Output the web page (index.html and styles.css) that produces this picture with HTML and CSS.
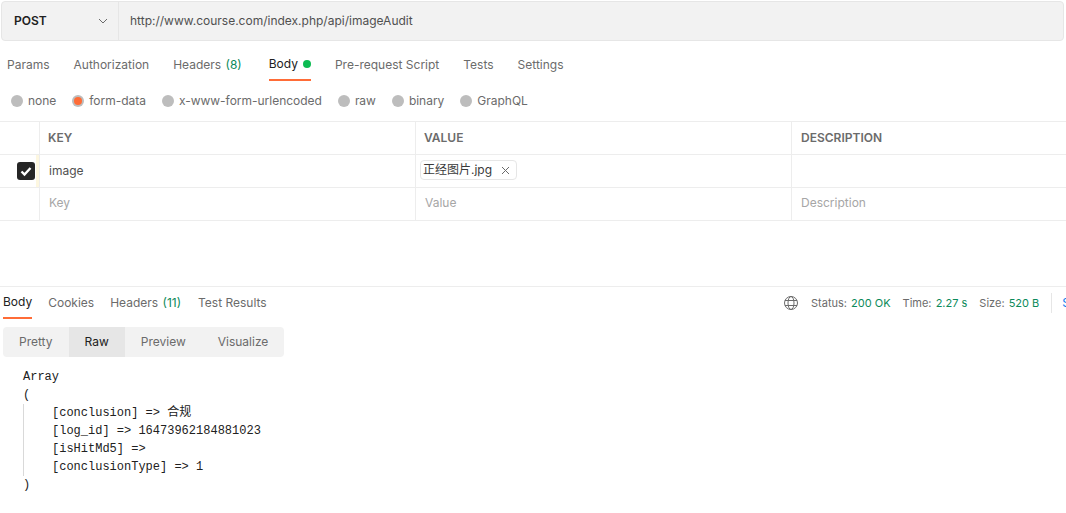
FILE: index.html
```html
<!DOCTYPE html>
<html lang="zh">
<head>
<meta charset="utf-8">
<title>POST imageAudit</title>
<link rel="stylesheet" href="styles.css">
</head>
<body>
<div class="url-bar">
  <div class="method"><span>POST</span>
    <svg class="chev" width="10" height="6" viewBox="0 0 10 6"><path d="M1 1l4 4 4-4" fill="none" stroke="#6b6b6b" stroke-width="1"/></svg>
  </div>
  <div class="url">http://www.course.com/index.php/api/imageAudit</div>
</div>
<nav class="tabs req-tabs">
  <span class="tab">Params</span>
  <span class="tab">Authorization</span>
  <span class="tab wide"><span>Headers <em>(8)</em></span></span>
  <span class="tab active">Body<i class="dot"></i></span>
  <span class="tab">Pre-request Script</span>
  <span class="tab">Tests</span>
  <span class="tab">Settings</span>
</nav>
<div class="radios">
  <label class="radio"><i class="rd"></i>none</label>
  <label class="radio"><i class="rd on"></i>form-data</label>
  <label class="radio"><i class="rd"></i>x-www-form-urlencoded</label>
  <label class="radio"><i class="rd"></i>raw</label>
  <label class="radio"><i class="rd"></i>binary</label>
  <label class="radio"><i class="rd"></i>GraphQL</label>
</div>
<div class="table">
  <div class="row head">
    <div class="c c0"></div><div class="c c1">KEY</div><div class="c c2">VALUE</div><div class="c c3">DESCRIPTION</div>
  </div>
  <div class="row">
    <div class="c c0 changed"><svg width="18" height="18" viewBox="0 0 18 18"><rect width="18" height="18" rx="3" fill="#262626"/><path d="M4.500 9.500l3 3 6-6.500" fill="none" stroke="#fff" stroke-width="2.400"/></svg></div>
    <div class="c c1 val">image</div>
    <div class="c c2"><span class="chip">正经图片.jpg<svg width="9" height="9" viewBox="0 0 9 9"><path d="M1 1l7 7M8 1L1 8" stroke="#6b6b6b" stroke-width="1"/></svg></span></div>
    <div class="c c3"></div>
  </div>
  <div class="row">
    <div class="c c0"></div><div class="c c1 ph">Key</div><div class="c c2 ph">Value</div><div class="c c3 ph">Description</div>
  </div>
</div>
<section class="response">
  <div class="res-head">
    <nav class="tabs res-tabs">
      <span class="tab active">Body</span>
      <span class="tab">Cookies</span>
      <span class="tab"><span>Headers <em>(11)</em></span></span>
      <span class="tab">Test Results</span>
    </nav>
    <div class="status">
      <svg width="16" height="16" viewBox="0 0 16 16" fill="none" stroke="#6b6b6b" stroke-width="1"><circle cx="8" cy="8" r="6.500"/><ellipse cx="8" cy="8" rx="3" ry="6.500"/><path d="M2 5.500h12M2 10.500h12"/></svg>
      <span class="st">Status: <b>200 OK</b></span>
      <span class="st">Time: <b>2.27 s</b></span>
      <span class="st">Size: <b>520 B</b></span>
      <span class="save">Save</span>
    </div>
  </div>
  <div class="seg">
    <span class="seg-item">Pretty</span>
    <span class="seg-item active">Raw</span>
    <span class="seg-item">Preview</span>
    <span class="seg-item">Visualize</span>
  </div>
  <div class="code">
    <div>Array</div>
    <div>(</div>
    <div class="inner">
      <div>[conclusion] =&gt; 合规</div>
      <div>[log_id] =&gt; 16473962184881023</div>
      <div>[isHitMd5] =&gt;</div>
      <div>[conclusionType] =&gt; 1</div>
    </div>
    <div>)</div>
  </div>
</section>
</body>
</html>
```
FILE: styles.css
```css
* { box-sizing: border-box; }
html, body { margin: 0; height: 513px; overflow: hidden; background: #fff; }
body { width: 1066px; font: 12px/16px Inter, "Noto Sans CJK SC", sans-serif; color: #6b6b6b; }

.url-bar { display: flex; height: 40px; margin: 1px 2px 0 1px; background: #f2f2f2; border: 1px solid #e6e6e6; border-radius: 4px; color: #505050; }
.method { width: 117px; flex: none; display: flex; align-items: center; justify-content: space-between; padding: 0 10px 0 12px; border-right: 1px solid #e6e6e6; font-weight: 600; color: #212121; }
.url { padding-left: 11px; line-height: 38px; }

.tabs { display: flex; }
.tab { display: flex; align-items: center; white-space: pre; }
.tab em { font-style: normal; color: #0c8a5a; margin: 0 1px; }
.tab.active { color: #212121; border-bottom: 2px solid #ff6c37; }

.req-tabs { height: 40px; padding: 7px 0 0 7px; gap: 24px; }
.req-tabs .tab { height: 33px; padding-top: 1px; }
.req-tabs .wide { margin-right: 2px; }
.dot { width: 8px; height: 8px; margin-left: 5px; border-radius: 50%; background: #0cbb52; }

.radios { display: flex; height: 40px; padding-left: 11px; gap: 16px; align-items: center; letter-spacing: -0.02px; }
.radio { display: flex; align-items: center; gap: 5px; }
.rd { width: 12px; height: 12px; border-radius: 50%; background: #bdbdbd; display: flex; align-items: center; justify-content: center; }
.rd.on::after { content: ""; width: 8px; height: 8px; border-radius: 50%; background: #ff6c37; }

.table { border-top: 1px solid #ededed; }
.row { display: flex; height: 33px; border-bottom: 1px solid #ededed; }
.c { display: flex; align-items: center; border-right: 1px solid #ededed; padding-left: 8px; }
.c0 { width: 40px; flex: none; padding-left: 17px; }
.c0.changed { box-shadow: inset -3px 0 0 #fdf7e0; }
.c1 { width: 376px; flex: none; padding-left: 9px; }
.c2 { width: 376px; flex: none; padding-left: 8px; }
.c3 { flex: 1; border-right: 0; padding-left: 9px; }
.head .c { font-weight: 600; color: #6b6b6b; }
.head .c1 { padding-left: 8px; }
.val { color: #505050; }
.ph { color: #a6a6a6; padding-bottom: 2px; }
.ph.c2 { padding-left: 9px; }
.chip { display: inline-flex; align-items: center; gap: 9px; height: 20px; margin: 0 0 2px -4px; padding: 0 6px 0 2px; border: 1px solid #e6e6e6; border-radius: 4px; color: #3a3a3a; }

.response { margin-top: 65px; border-top: 1px solid #ededed; }
.res-head { display: flex; justify-content: space-between; height: 32px; }
.res-tabs { padding-left: 3px; gap: 16px; }
.res-tabs .tab { height: 32px; }
.status { display: flex; align-items: center; gap: 12px; overflow: hidden; width: 283px; flex: none; white-space: nowrap; }
.status svg { flex: none; }
.st { flex: none; font-size: 11px; }
.st b { font-weight: 400; color: #0c8a5a; margin-left: 1px; }
.save { flex: none; height: 20px; line-height: 20px; color: #097bed; border-left: 1px solid #e6e6e6; padding-left: 10px; }

.seg { display: flex; width: 281px; height: 30px; margin: 8px 0 0 3px; background: #f2f2f2; border-radius: 4px; overflow: hidden; }
.seg-item { display: flex; align-items: center; padding: 0 16px; }
.seg-item.active { background: #e6e6e6; color: #212121; }

.code { margin: 11px 0 0 23px; font: 12px/18px "Liberation Mono", "Noto Sans CJK SC", monospace; color: #212121; }
.inner { padding-left: 28px; border-left: 1px solid #d9d9d9; }
```
